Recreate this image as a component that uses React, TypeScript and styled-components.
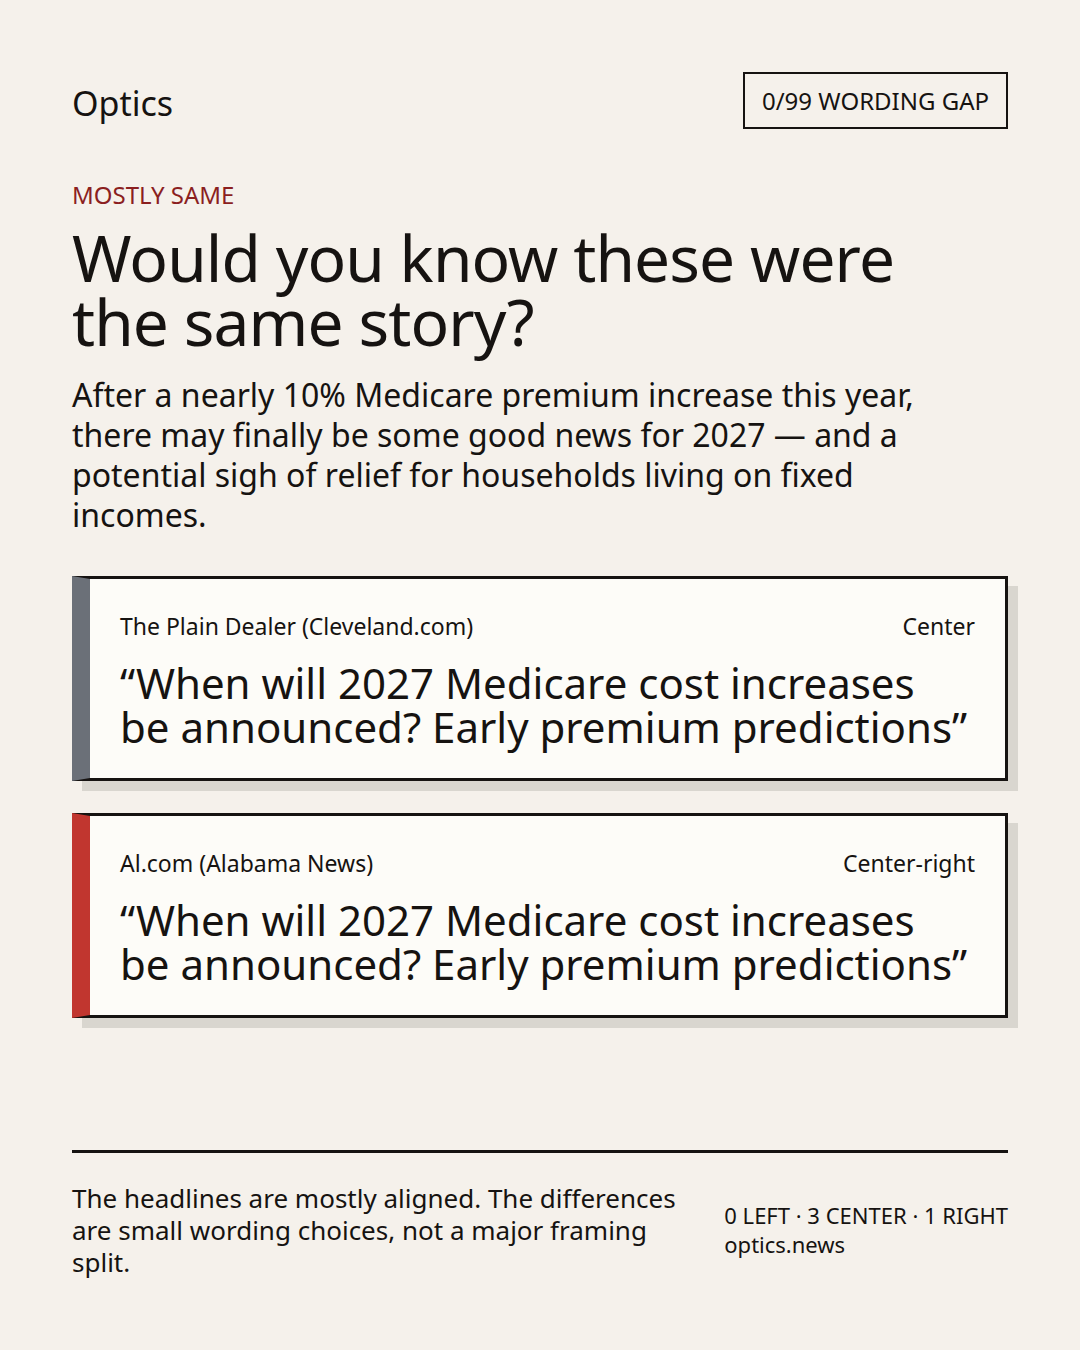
import styled, { createGlobalStyle } from "styled-components";

const INK = "#161311";
const PAPER = "#f5f1eb";
const CARD = "#fdfcf8";
const SHADOW = "#d9d6cf";

type Story = {
  outlet: string;
  lean: string;
  accent: string;
  headline: string;
};

const stories: Story[] = [
  {
    outlet: "The Plain Dealer (Cleveland.com)",
    lean: "Center",
    accent: "#6b7078",
    headline:
      "\u201CWhen will 2027 Medicare cost increases be announced? Early premium predictions\u201D",
  },
  {
    outlet: "Al.com (Alabama News)",
    lean: "Center-right",
    accent: "#c1362f",
    headline:
      "\u201CWhen will 2027 Medicare cost increases be announced? Early premium predictions\u201D",
  },
];

const GlobalStyle = createGlobalStyle`
  html, body {
    margin: 0;
    padding: 0;
    background: ${PAPER};
  }
  * {
    box-sizing: border-box;
  }
`;

export default function App() {
  return (
    <>
      <GlobalStyle />
      <Page>
        <Header>
          <Brand>Optics</Brand>
          <Badge>0/99 WORDING GAP</Badge>
        </Header>

        <Kicker>MOSTLY SAME</Kicker>
        <Title>Would you know these were the same story?</Title>
        <Lede>
          After a nearly 10% Medicare premium increase this year, there may
          finally be some good news for 2027 — and a potential sigh of relief
          for households living on fixed incomes.
        </Lede>

        <Cards>
          {stories.map((s) => (
            <Card key={s.outlet} $accent={s.accent}>
              <CardMeta>
                <span>{s.outlet}</span>
                <span>{s.lean}</span>
              </CardMeta>
              <CardHeadline>{s.headline}</CardHeadline>
            </Card>
          ))}
        </Cards>

        <Footer>
          <Summary>
            The headlines are mostly aligned. The differences are small
            wording choices, not a major framing split.
          </Summary>
          <Tally>
            <div>0 LEFT · 3 CENTER · 1 RIGHT</div>
            <div>optics.news</div>
          </Tally>
        </Footer>
      </Page>
    </>
  );
}

const Page = styled.div`
  display: flex;
  flex-direction: column;
  min-height: 1350px;
  padding: 72px;
  background: ${PAPER};
  color: ${INK};
  font-family: "Noto Sans", "Open Sans", sans-serif;
`;

const Header = styled.header`
  display: flex;
  justify-content: space-between;
  align-items: center;
`;

const Brand = styled.div`
  font-size: 34px;
  line-height: 1;
  margin-top: 4px;
`;

const Badge = styled.div`
  border: 2px solid ${INK};
  padding: 0 17px;
  height: 57px;
  display: flex;
  align-items: center;
  font-size: 24px;
`;

const Kicker = styled.div`
  margin-top: 50px;
  font-size: 24px;
  line-height: 32px;
  color: #8b1f1f;
`;

const Title = styled.h1`
  margin: 15px 0 0;
  font-weight: 400;
  font-size: 64px;
  line-height: 64px;
  letter-spacing: -0.014em;
  max-width: 880px;
`;

const Lede = styled.p`
  margin: 21px 0 0;
  font-size: 32px;
  line-height: 40px;
  max-width: 880px;
`;

const Cards = styled.div`
  display: flex;
  flex-direction: column;
  gap: 32px;
  margin-top: 41px;
`;

const Card = styled.article<{ $accent: string }>`
  background: ${CARD};
  border: 3px solid ${INK};
  border-left: 18px solid ${(p) => p.$accent};
  box-shadow: 10px 10px 0 ${SHADOW};
  padding: 32px 30px 29px;
`;

const CardMeta = styled.div`
  display: flex;
  justify-content: space-between;
  font-size: 23px;
  line-height: 30px;
`;

const CardHeadline = styled.div`
  margin-top: 20px;
  font-size: 42px;
  line-height: 44px;
`;

const Footer = styled.footer`
  margin-top: auto;
  border-top: 3px solid ${INK};
  padding-top: 29px;
  display: flex;
  justify-content: space-between;
  align-items: center;
`;

const Summary = styled.p`
  margin: 0;
  max-width: 620px;
  font-size: 26px;
  line-height: 32px;
`;

const Tally = styled.div`
  font-size: 22px;
  line-height: 29px;
`;
